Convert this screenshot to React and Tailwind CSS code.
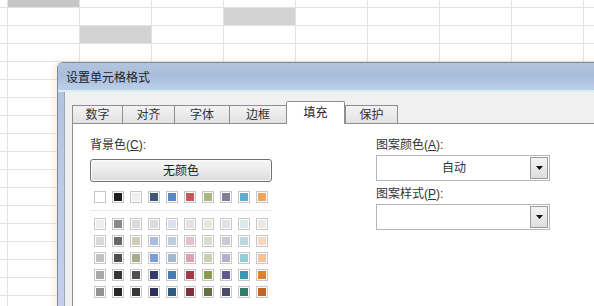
import React from 'react';

// theme colour picker, top row + five tint rows
const themeRow = ['#ffffff', '#1e1e1e', '#eeeeee', '#3e5879', '#5a88c4', '#c4585a', '#a8b87e', '#7f7f99', '#62aad0', '#eea45c'];
const tintRows = [
  ['#ededed', '#8a8a8a', '#dcdcd6', '#d9dde3', '#dce3ec', '#ebdfe1', '#e6ebdf', '#e1e1e8', '#dbe8ec', '#f1e6dd'],
  ['#d9d9d9', '#666666', '#cfcdb5', '#a9bde2', '#bfcde0', '#e2c2c8', '#dadccd', '#cbc9d3', '#bcdbe1', '#f7d7bf'],
  ['#c1c1c1', '#4f4f4f', '#a9aa8a', '#7c9cd9', '#a2b8d1', '#d9a3b1', '#c7d1b0', '#b1b0c7', '#92ced5', '#f6c196'],
  ['#a9a9a9', '#363636', '#4f4f4f', '#323c6a', '#4a79b0', '#a23a4a', '#8a9b4b', '#625a8f', '#3a98b0', '#e67f24'],
  ['#929292', '#262626', '#363636', '#2a3259', '#325a7a', '#7a3242', '#617142', '#4a4a69', '#327a69', '#c7621a'],
];

const tabs = [
  { label: '数字', w: 'w-[50px]' },
  { label: '对齐', w: 'w-[52px]' },
  { label: '字体', w: 'w-[55px]' },
  { label: '边框', w: 'w-[57px]' },
  { label: '填充', w: 'w-[59px]', active: true },
  { label: '保护', w: 'w-[53px]' },
];

// shaded spreadsheet cells, key = row-col
const shaded = {
  '0-1': 'bg-[#c6c6c6]',
  '2-2': 'bg-[#d3d3d3]',
  '1-4': 'bg-[#d3d3d3]',
};

const Swatch = ({ color }) => (
  <div className="w-[12px] h-[12px] border border-[#c8c8c8] p-px bg-white">
    <div className="w-full h-full" style={{ backgroundColor: color }} />
  </div>
);

const Combo = ({ value }) => (
  <div className="flex w-[174px] h-[26px] border border-[#b4b6bc] bg-white p-px">
    <div className="flex-1 flex items-center justify-center text-[12px] text-[#333]">{value}</div>
    <div className="w-[18px] flex items-center justify-center border border-[#9a9a9a] bg-gradient-to-b from-[#f4f4f4] to-[#dedede]">
      <svg width="7" height="4" viewBox="0 0 7 4">
        <path d="M0 0h7L3.5 4z" fill="#111" />
      </svg>
    </div>
  </div>
);

const Label = ({ text, hot }) => (
  <div className="h-[14px] leading-[14px] text-[12px] text-[#333]">
    {text}(<span className="underline">{hot}</span>):
  </div>
);

export default function App() {
  return (
    <div className="relative w-[594px] h-[306px] overflow-hidden bg-white font-[family-name:'Liberation_Sans','Noto_Sans_CJK_SC',sans-serif]">
      {/* spreadsheet behind */}
      <div className="grid grid-cols-[8px_repeat(9,72px)] grid-rows-[8px_repeat(17,18px)]">
        {Array.from({ length: 18 }).map((_, r) =>
          Array.from({ length: 10 }).map((_, c) => (
            <div key={`${r}-${c}`} className={`border-r border-b border-[#e2e2e2] ${shaded[`${r}-${c}`] || ''}`} />
          ))
        )}
      </div>

      {/* dialog */}
      <div className="absolute left-[57px] top-[62px] w-[560px] h-[270px] flex flex-col rounded-tl-[6px] border border-[#7c8aa0] bg-gradient-to-b from-[#adc1dd] via-[#bccbe8] to-[#c8cef2] shadow-[-3px_0_6px_rgba(240,200,170,0.35)]">
        <div className="h-[27px] flex items-center px-[8px] pt-[3px] text-[12px] text-[#222] bg-gradient-to-b from-[#b2c4dd] via-[#a9bedd] to-[#bdd0ea]">
          设置单元格格式
        </div>
        <div className="h-[2px] bg-[#d8eff2]" />
        <div className="flex-1 flex">
          <div className="w-[6px]" />
          <div className="flex-1 flex flex-col bg-[#f0f0f0] border-l border-[#9aa7bb] pl-[7px] pt-[9px]">
            {/* tabs */}
            <div className="flex items-end h-[22px]">
              {tabs.map((t) =>
                t.active ? (
                  <div
                    key={t.label}
                    className={`${t.w} h-[23px] -mb-px relative z-10 flex items-center justify-center border border-b-0 border-[#8c8e94] bg-white text-[12px] text-[#222] rounded-t-[2px]`}
                  >
                    {t.label}
                  </div>
                ) : (
                  <div
                    key={t.label}
                    className={`${t.w} h-[18px] flex items-center justify-center border border-b-0 border-r-0 last:border-r border-[#8c8e94] bg-gradient-to-b from-[#f3f3f3] to-[#e2e2e2] text-[12px] text-[#333]`}
                  >
                    {t.label}
                  </div>
                )
              )}
            </div>

            {/* fill panel */}
            <div className="flex-1 flex bg-white border-l border-t border-[#8c8e94] pl-[17px] pt-[14px]">
              <div className="w-[182px] flex flex-col">
                <Label text="背景色" hot="C" />
                <div className="mt-[7px] h-[23px] flex items-center justify-center rounded-[3px] border border-[#707070] bg-gradient-to-b from-[#f6f6f6] via-[#ebebeb] to-[#dadada] text-[12px] text-[#222] shadow-[inset_0_0_0_1px_#fcfcfc]">
                  无颜色
                </div>
                <div className="mt-[9px] pl-[4px] flex gap-[6px]">
                  {themeRow.map((c, i) => (
                    <Swatch key={i} color={c} />
                  ))}
                </div>
                <div className="mt-[7px] h-px bg-[#ececec]" />
                <div className="mt-[7px] pl-[4px] flex flex-col gap-[5px]">
                  {tintRows.map((row, ri) => (
                    <div key={ri} className="flex gap-[6px]">
                      {row.map((c, i) => (
                        <Swatch key={i} color={c} />
                      ))}
                    </div>
                  ))}
                </div>
              </div>

              <div className="ml-[104px] flex flex-col">
                <Label text="图案颜色" hot="A" />
                <div className="mt-[3px]">
                  <Combo value="自动" />
                </div>
                <div className="mt-[6px]">
                  <Label text="图案样式" hot="P" />
                </div>
                <div className="mt-[3px]">
                  <Combo value="" />
                </div>
              </div>
            </div>
          </div>
        </div>
      </div>
    </div>
  );
}
